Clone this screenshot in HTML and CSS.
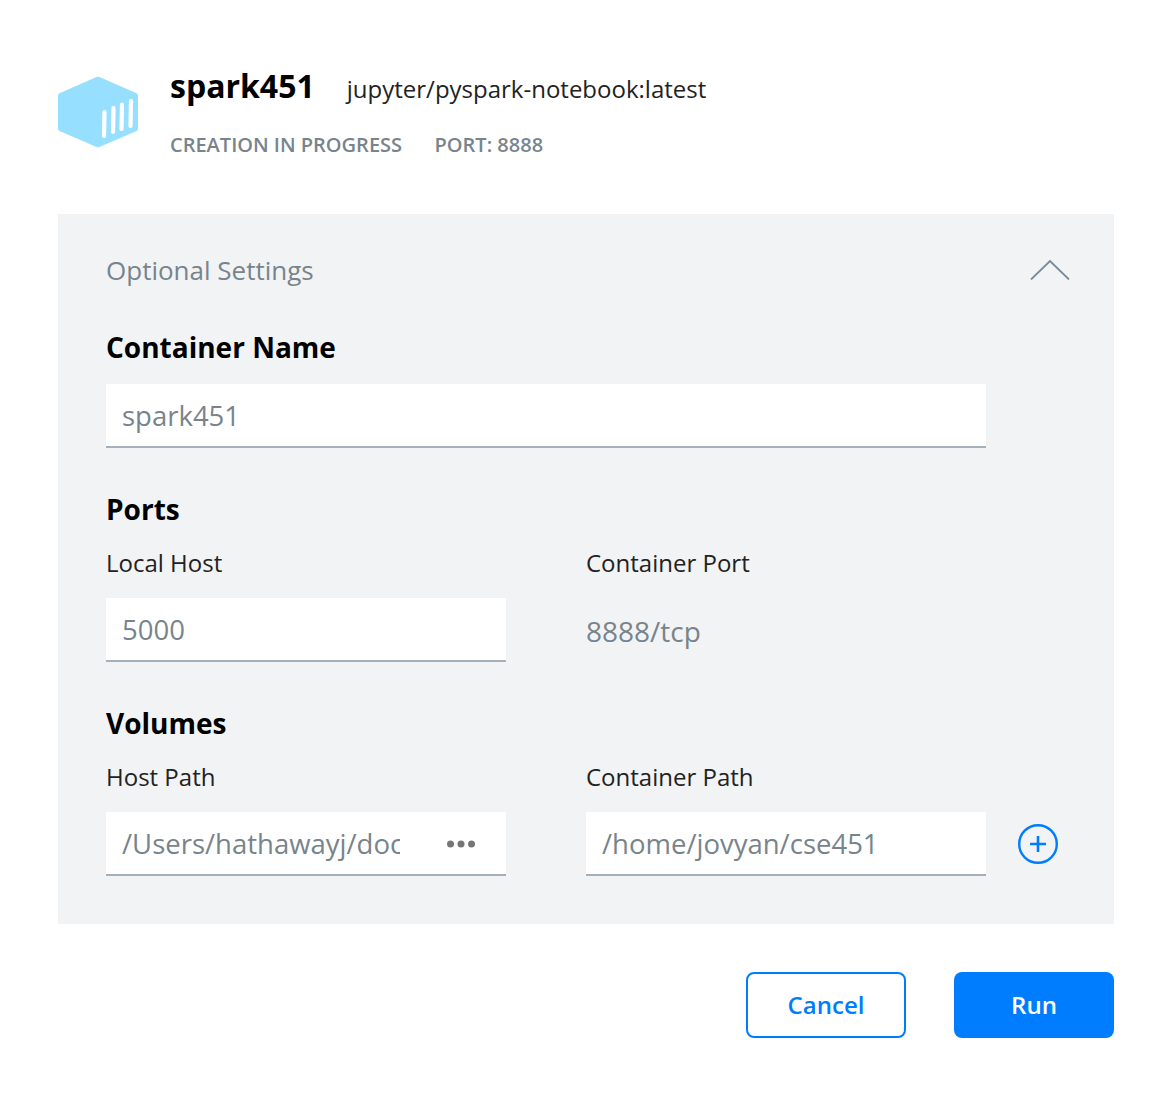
FILE: index.html
```html
<!DOCTYPE html>
<html lang="en">
<head>
<meta charset="utf-8">
<title>spark451</title>
<link rel="stylesheet" href="styles.css">
</head>
<body>
<main class="dialog">
  <header class="head">
    <svg class="logo" width="80" height="72" viewBox="0 0 80 72">
      <path d="M38 1.200a5 5 0 0 1 4 0L78 17a3 3 0 0 1 2 2.800V52.400a3 3 0 0 1-2 2.800L42 70.800a5 5 0 0 1-4 0L2 55.200a3 3 0 0 1-2-2.800V19.800a3 3 0 0 1 2-2.800Z" fill="#97DFFF"/>
      <g stroke="#fff" stroke-width="4.200" stroke-linecap="round">
        <path d="M46.500 36L46 60"/><path d="M55.500 32L55 56"/><path d="M64 28.500L63.500 53"/><path d="M73 25L72.500 50"/>
      </g>
    </svg>
    <div class="head-text">
      <div class="title-row">
        <h1 class="title">spark451</h1>
        <span class="image">jupyter/pyspark-notebook:latest</span>
      </div>
      <div class="meta-row">
        <span>CREATION IN PROGRESS</span>
        <span>PORT: 8888</span>
      </div>
    </div>
  </header>

  <section class="panel">
    <div class="panel-head">
      <span class="panel-title">Optional Settings</span>
      <svg class="chevron" width="40" height="20" viewBox="0 0 40 20"><path d="M1 19.500L20 1l19 18.500" fill="none" stroke="#7A8A99" stroke-width="1.800"/></svg>
    </div>

    <h2 class="section first">Container Name</h2>
    <div class="field wide"><span class="value">spark451</span></div>

    <h2 class="section">Ports</h2>
    <div class="cols labels">
      <span class="label">Local Host</span>
      <span class="label">Container Port</span>
    </div>
    <div class="cols">
      <div class="field"><span class="value">5000</span></div>
      <span class="static">8888/tcp</span>
    </div>

    <h2 class="section">Volumes</h2>
    <div class="cols labels">
      <span class="label">Host Path</span>
      <span class="label">Container Path</span>
    </div>
    <div class="cols">
      <div class="field">
        <span class="value clip">/Users/hathawayj/documents</span>
        <svg class="dots" width="28" height="8" viewBox="0 0 28 8"><g fill="#767676"><circle cx="3.500" cy="4" r="3.500"/><circle cx="14" cy="4" r="3.500"/><circle cx="24.500" cy="4" r="3.500"/></g></svg>
      </div>
      <div class="field"><span class="value">/home/jovyan/cse451</span></div>
      <svg class="plus" width="40" height="40" viewBox="0 0 40 40"><circle cx="20" cy="20" r="18.800" fill="none" stroke="#007DFF" stroke-width="2.400"/><path d="M12 20H28M20 12V28" fill="none" stroke="#007DFF" stroke-width="2.600"/></svg>
    </div>
  </section>

  <footer class="actions">
    <button class="btn outline"><span class="btn-label">Cancel</span></button>
    <button class="btn solid"><span class="btn-label">Run</span></button>
  </footer>
</main>
</body>
</html>
```

FILE: styles.css
```css
* { box-sizing: border-box; }
html, body { margin: 0; background: #fff; }
body { font-family: "Open Sans", "Noto Sans", sans-serif; color: #000; }
.dialog { width: 1176px; height: 1100px; padding: 63px 62px 0 58px; }

.head { display: flex; align-items: flex-start; height: 151px; }
.logo { margin-top: 13px; flex: none; }
.head-text { margin-left: 32px; }
.title-row { display: flex; align-items: baseline; height: 46px; }
.title { margin: 0; font-size: 32px; line-height: 46px; font-weight: 700; }
.image { margin-left: 32px; font-size: 24px; color: #222; }
.meta-row { display: flex; gap: 32.500px; margin-top: 22px; font-size: 20px; line-height: 28px; font-weight: 600; color: #78848C; }

.panel { height: 710px; background: #F1F3F5; padding: 35px 48px 0; }
.panel-head { display: flex; justify-content: space-between; align-items: center; height: 42px; }
.panel-title { font-size: 26px; color: #78848C; }
.chevron { margin-right: -4px; }
.section { margin: 42px 0 0; font-size: 28px; line-height: 38px; font-weight: 700; }
.section.first { margin-top: 37px; }
.cols { display: flex; gap: 80px; align-items: center; }
.labels { margin-top: 19px; height: 32px; margin-bottom: 19px; }
.labels .label { width: 400px; font-size: 24px; line-height: 32px; color: #222; }
.field { position: relative; display: flex; align-items: center; width: 400px; height: 64px; background: #fff; border-bottom: 2px solid #A4B0BC; padding: 0 16px; }
.wide { width: 880px; margin-top: 18px; }
.value { font-size: 27.500px; color: #78848C; white-space: nowrap; }
.clip { display: block; width: 278px; overflow: hidden; }
.dots { position: absolute; left: 341px; top: 28px; }
.static { font-size: 28px; color: #78848C; padding-top: 2px; }
.plus { margin-left: -48px; }

.actions { display: flex; justify-content: flex-end; gap: 48px; margin-top: 48px; }
.btn { width: 160px; height: 66px; border-radius: 8px; font: 600 24px "Open Sans", "Noto Sans", sans-serif; padding: 0; }
.btn-label { position: relative; top: -1px; }
.outline { background: #fff; border: 2px solid #007DFF; color: #007DFF; }
.solid { background: #007DFF; border: 0; color: #fff; }
```
